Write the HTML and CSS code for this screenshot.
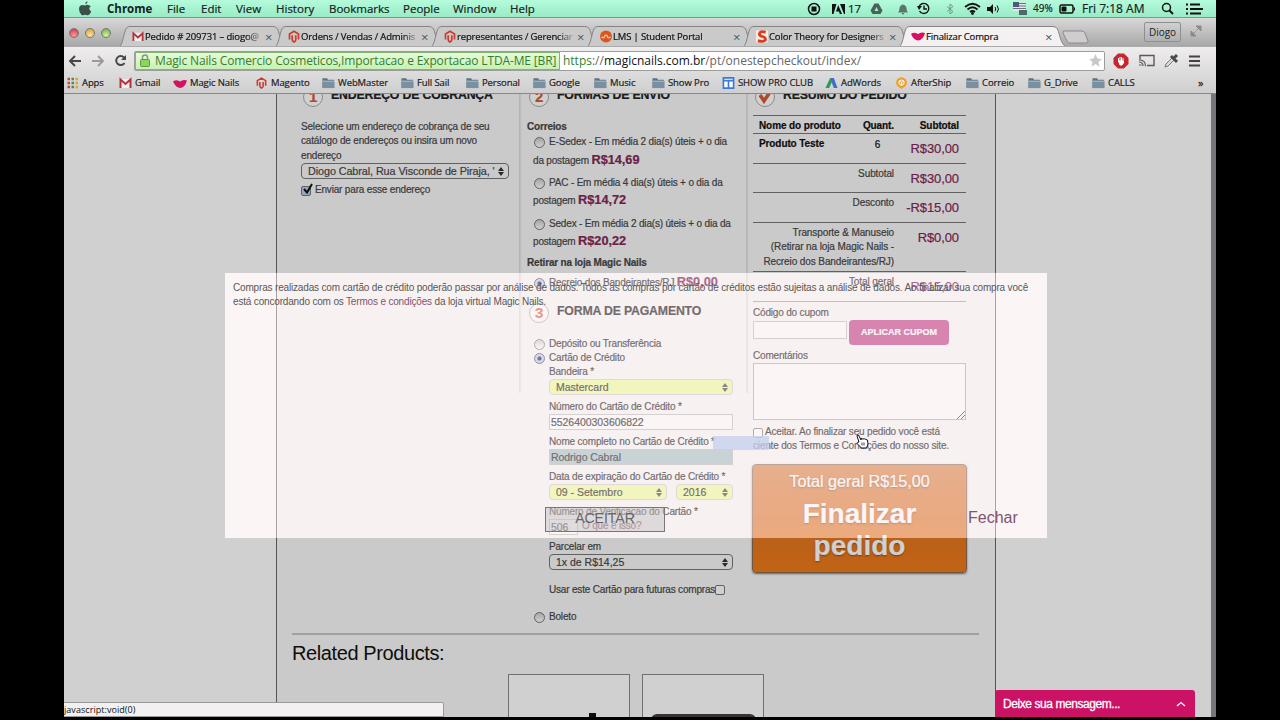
FILE: index.html
```
<!DOCTYPE html>
<html lang="pt-BR">
<head>
    <meta charset="UTF-8">
    <meta name="viewport" content="width=device-width, initial-scale=1.0">
    <title>Finalizar Compra</title>
    <link rel="stylesheet" href="styles.css">
</head>
<body>
    <!-- Shared icons -->
    <svg class="defs" width="0" height="0">
        <symbol id="folder" viewBox="0 0 14 12"><path d="M.5 1h5l1 1.500h6.500V11H.5z" fill="#5d7384"/><path d="M.5 4h13v7.500H.5z" fill="#7890a2"/><path d="M.5 3.500h13v1H.5z" fill="#b9c7d1"/></symbol>
        <symbol id="gmail" viewBox="0 0 13 12"><path d="M1 2h11v9H1z" fill="#eee"/><path d="M1.500 11V2.500l5 4.500 5-4.500V11" fill="none" stroke="#b4323a" stroke-width="2"/></symbol>
        <symbol id="magento" viewBox="0 0 12 13"><path d="M1.500 9.500V4L6 1.200 10.500 4v5.500M4.200 10.500V5.300M7.800 10.500V5.300M4.200 10.500L6 12l1.800-1.500" fill="none" stroke="#cf3b2b" stroke-width="1.700"/></symbol>
        <symbol id="lips" viewBox="0 0 14 9"><path d="M0 2Q3 0 6 1.500 7 2.300 8 1.500 11 0 14 1 12 8 7.500 8.500 2.500 8 0 2z" fill="#d5125f"/></symbol>
        <symbol id="tab-shape" viewBox="0 0 166 20"><path d="M0 20C3 18 4 4 7 1.500Q8 .5 10 .5H153Q156 .5 157.500 3C160 9 161 18 165 20"/></symbol>
    </svg>

    <div class="screen">
        <div class="menubar">
            <svg width="14" height="16" viewBox="0 0 14 16"><path d="M9.500 0Q9.800 2.500 7.200 3.600 6.900 1.300 9.500 0zM7 4.600Q8.500 3.700 10 3.900 12 4.100 12.800 5.300 9.500 7.500 13.200 10.400 12.400 12.800 10.600 14.100 9.500 14.500 8.300 13.900 7 13.500 5.800 14 4.500 14.700 3.400 13.800 1 11.500 1 8 1.100 4.500 4 4 5.500 3.900 7 4.600z" fill="#3b5049"/></svg>
            <b>Chrome</b><span>File</span><span>Edit</span><span>View</span><span>History</span><span>Bookmarks</span><span>People</span><span>Window</span><span>Help</span>
            <svg width="14" height="14" viewBox="0 0 14 14"><circle cx="7" cy="7" r="5.500" fill="none" stroke="#111" stroke-width="1.500"/><rect x="4.500" y="4.500" width="5" height="5" fill="#111"/></svg>
            <svg width="13" height="12" viewBox="0 0 13 12"><path d="M0 1h4.500L1.500 11H0zM8 1h5v10h-1zM6.200 2L10 11H7.800L7 8.500H4z" fill="#111"/></svg>
            <span>17</span>
            <svg width="13" height="12" viewBox="0 0 13 12"><path d="M4.500.5h4l4 7-2 3.500h-8L.5 7.500z" fill="#48625a"/><path d="M6.500 4L4.500 8h4z" fill="#a9ecd0"/></svg>
            <svg width="12" height="12" viewBox="0 0 12 12"><path d="M1 9.500Q2.500 8 2.500 5 3 2 6 1.500 9 2 9.500 5 9.500 8 11 9.500zM4.500 10h3L6 12z" fill="#55786b"/></svg>
            <svg width="14" height="13" viewBox="0 0 14 13"><path d="M2 5A5 5 0 1 1 2.500 9M7 3.500V7h3" fill="none" stroke="#111" stroke-width="1.400"/><path d="M0 4h5L2 8z" fill="#111"/></svg>
            <svg width="8" height="12" viewBox="0 0 8 12"><path d="M1 3.500l6 5L4 11V1l3 2.500-6 5" fill="none" stroke="#6a9c88"/></svg>
            <svg width="17" height="13" viewBox="0 0 17 13"><path d="M1 5Q8.500-1.500 16 5M3.500 7.500Q8.500 3 13.500 7.500M6 10Q8.500 8 11 10" fill="none" stroke="#111" stroke-width="1.800"/><circle cx="8.500" cy="11.500" r="1.400" fill="#111"/></svg>
            <svg width="13" height="12" viewBox="0 0 13 12"><path d="M0 4h3l3-3v10L3 8H0z" fill="#111"/><path d="M8 4q1.500 2 0 4M10 2.500q3 3.500 0 7" fill="none" stroke="#111"/></svg>
            <svg width="14" height="13" viewBox="0 0 14 13"><path d="M0 0h13v9H0z" fill="#dce9e5"/><path d="M0 0h6v5H0z" fill="#485b7a"/><path d="M6 1.500h7M6 4h7M0 6.500h13" stroke="#6f6d78"/><path d="M6 8h8v5H6z" fill="#4a6b69"/></svg>
            <span class="battery">49%</span>
            <svg width="17" height="10" viewBox="0 0 17 10"><rect x="1" y="1" width="13" height="8" rx="1.500" fill="none" stroke="#111" stroke-width="1.500"/><path d="M3 3h4v4H3zM15.500 3.500v3" stroke="#111" fill="#111"/></svg>
            <span class="clock">Fri 7:18 AM</span>
            <svg width="13" height="13" viewBox="0 0 13 13"><path d="M8 8l4 4" stroke="#111" stroke-width="2"/><circle cx="5.500" cy="5.500" r="4" fill="none" stroke="#111" stroke-width="1.500"/></svg>
            <svg width="17" height="12" viewBox="0 0 17 12"><path d="M0 1.500h2M0 6h2M0 10.500h2M4 1.500h10M4 6h13M4 10.500h11" stroke="#111" stroke-width="1.800"/></svg>
        </div>

        <div class="tabstrip">
            <div class="lights"><i class="red"></i><i class="yellow"></i><i class="green"></i></div>
            <div class="tab"><svg class="tab-bg"><use href="#tab-shape"/></svg><svg class="fav"><use href="#gmail"/></svg><span>Pedido # 209731 – diogo@</span><em>×</em></div>
            <div class="tab"><svg class="tab-bg"><use href="#tab-shape"/></svg><svg class="fav"><use href="#magento"/></svg><span>Ordens / Vendas / Adminis</span><em>×</em></div>
            <div class="tab"><svg class="tab-bg"><use href="#tab-shape"/></svg><svg class="fav"><use href="#magento"/></svg><span>representantes / Gerenciar</span><em>×</em></div>
            <div class="tab"><svg class="tab-bg"><use href="#tab-shape"/></svg><svg class="fav" viewBox="0 0 13 13"><circle cx="6.500" cy="6.500" r="6.500" fill="#d8581f"/><path d="M2 6.500a1.500 1.500 0 0 0 3 0 1.500 1.500 0 0 1 3 0 1.500 1.500 0 0 0 3 0" fill="none" stroke="#f3c3a8" stroke-width="1.500"/></svg><span>LMS | Student Portal</span><em>×</em></div>
            <div class="tab"><svg class="tab-bg"><use href="#tab-shape"/></svg><svg class="fav" viewBox="0 0 13 13"><path d="M0 0h13v13H0z" fill="#f5ece8"/><path d="M10.500 2Q4 0 3.500 4 4 6 7 6.500q4 1 3 4Q8 13 2 11" fill="none" stroke="#d8401f" stroke-width="3"/></svg><span>Color Theory for Designers</span><em>×</em></div>
            <div class="tab active"><svg class="tab-bg"><use href="#tab-shape"/></svg><svg class="fav"><use href="#lips"/></svg><span>Finalizar Compra</span><em>×</em></div>
            <svg class="newtab" width="28" height="14" viewBox="0 0 28 14"><path d="M2 1h18q2 0 3 2l3 8q0 2-2 2H8q-2 0-3-2L1 3q-.5-2 1-2z" fill="#cfcdce" stroke="#8a898a"/></svg>
            <div class="user">Diogo</div>
            <svg class="expand" width="12" height="12" viewBox="0 0 12 12"><path d="M6 1h5v5zM1 6v5h5zM6.500 5.500L10 2M2 10l3.500-3.500" fill="#8b8b8b" stroke="#8b8b8b"/></svg>
        </div>

        <div class="toolbar">
            <svg width="14" height="12" viewBox="0 0 14 12"><path d="M13 6H2M7 1L2 6l5 5" fill="none" stroke="#484848" stroke-width="2"/></svg>
            <svg width="14" height="12" viewBox="0 0 14 12"><path d="M1 6h11M7 1l5 5-5 5" fill="none" stroke="#9a9a9a" stroke-width="1.800"/></svg>
            <svg width="13" height="13" viewBox="0 0 13 13"><path d="M10.500 9A4.500 4.500 0 1 1 10 3.500" fill="none" stroke="#484848" stroke-width="2"/><path d="M12 1v5H7z" fill="#484848"/></svg>
            <div class="url">
                <div class="cert"><svg width="10" height="13" viewBox="0 0 10 13"><path d="M2.500 6V3.500q0-2.500 2.500-2.500t2.500 2.500V6" fill="none" stroke="#8a958a" stroke-width="1.500"/><rect x=".5" y="5.500" width="9" height="7" rx="1" fill="#8dd45f" stroke="#5c9c42"/></svg><span>Magic Nails Comercio Cosmeticos,Importacao e Exportacao LTDA-ME [BR]</span></div>
                <div class="address"><i>https</i>://<b>magicnails.com.br</b>/pt/onestepcheckout/index/</div>
                <svg class="star" width="13" height="13" viewBox="0 0 13 13"><path d="M6.500 0l1.900 4.500 4.600.4-3.500 3 1 4.800-4-2.600-4 2.600 1-4.800L0 4.900l4.600-.4z" fill="#c9c8c9"/></svg>
            </div>
            <svg width="16" height="16" viewBox="0 0 16 16"><path d="M5 .5h6L15.500 5v6L11 15.500H5L.5 11V5z" fill="#c32730"/><path d="M5.500 8V5M7 8V4M8.500 8V4M10 8V5M5.500 8h5v2l-1.500 2h-2z" stroke="#fff" fill="#fff"/></svg>
            <svg width="16" height="13" viewBox="0 0 16 13"><path d="M1 5V1.500h14v10H8" fill="none" stroke="#5a5a5a" stroke-width="1.400"/><path d="M0 11h2.500M0 8q4 0 4 4M0 5.800q6.500 0 6.500 6.500" fill="none" stroke="#5a5a5a" stroke-width="1.200"/></svg>
            <svg width="16" height="15" viewBox="0 0 16 15"><path d="M1 14l1-3 6-6 2 2-6 6z" fill="#ddd" stroke="#777"/><path d="M7 3l6 6M9.500 5.500L13 2" stroke="#4a4a52" stroke-width="3"/></svg>
            <svg width="11" height="12" viewBox="0 0 11 12"><path d="M0 1.500h11M0 6h11M0 10.500h11" stroke="#444" stroke-width="2"/></svg>
        </div>

        <div class="bookmarks">
            <div><svg viewBox="0 0 12 12"><path d="M1 2h2.500M1 6h2.500M1 10h2.500" stroke="#c4483a" stroke-width="2.500"/><path d="M5 2h2.500M5 6h2.500M5 10h2.500" stroke="#588a4a" stroke-width="2.500"/><path d="M9 2h2.500M9 6h2.500M9 10h2.500" stroke="#d9a92e" stroke-width="2.500"/></svg>Apps</div>
            <div><svg><use href="#gmail"/></svg>Gmail</div>
            <div><svg class="lips"><use href="#lips" y="1"/></svg>Magic Nails</div>
            <div><svg><use href="#magento"/></svg>Magento</div>
            <div><svg><use href="#folder"/></svg>WebMaster</div>
            <div><svg><use href="#folder"/></svg>Full Sail</div>
            <div><svg><use href="#folder"/></svg>Personal</div>
            <div><svg><use href="#folder"/></svg>Google</div>
            <div><svg><use href="#folder"/></svg>Music</div>
            <div><svg><use href="#folder"/></svg>Show Pro</div>
            <div><svg viewBox="0 0 13 13"><path d="M1 1h11v11H1zM1 4h11M6.500 4v8" fill="#fff" stroke="#3b78d8" stroke-width="1.800"/></svg>SHOW PRO CLUB</div>
            <div><svg viewBox="0 0 13 13"><path d="M5 1h4l4 11H9z" fill="#3a6fd0"/><path d="M5 1l2.500 3L4 12H0z" fill="#2f9a55"/></svg>AdWords</div>
            <div><svg viewBox="0 0 13 13"><path d="M6.500 13L3.500 10h6z" fill="#e8982a"/><circle cx="6.500" cy="6" r="5.800" fill="#eda02e"/><path d="M3.800 4.500l2.700-1.300 2.700 1.300v3L6.500 9 3.800 7.500zM3.800 4.500l2.700 1.300 2.700-1.300M6.500 6v3" fill="none" stroke="#fff"/></svg>AfterShip</div>
            <div><svg><use href="#folder"/></svg>Correio</div>
            <div><svg><use href="#folder"/></svg>G_Drive</div>
            <div><svg><use href="#folder"/></svg>CALLS</div>
            <div class="more">»</div>
        </div>

        <div class="viewport">
            <div class="page">
                <div class="columns">
                    <div class="col billing">
                        <h3><i>1</i>ENDEREÇO DE COBRANÇA</h3>
                        <p>Selecione um endereço de cobrança de seu<br>catálogo de endereços ou insira um novo<br>endereço</p>
                        <div class="select"><span>Diogo Cabral, Rua Visconde de Piraja, '</span></div>
                        <label class="ship"><i class="check on"><svg width="11" height="12" viewBox="0 0 11 12"><path d="M2 6l3 3.500L10 1" fill="none" stroke="#111" stroke-width="2"/></svg></i>Enviar para esse endereço</label>
                    </div>

                    <div class="col shipping">
                        <h3><i>2</i>FORMAS DE ENVIO</h3>
                        <h4>Correios</h4>
                        <div class="rate"><i class="radio"></i>E-Sedex - Em média 2 dia(s) úteis + o dia<br>da postagem <b>R$14,69</b></div>
                        <div class="rate"><i class="radio"></i>PAC - Em média 4 dia(s) úteis + o dia da<br>postagem <b>R$14,72</b></div>
                        <div class="rate"><i class="radio"></i>Sedex - Em média 2 dia(s) úteis + o dia da<br>postagem <b>R$20,22</b></div>
                        <h4 class="store">Retirar na loja Magic Nails</h4>
                        <div class="rate pickup"><i class="radio on"></i>Recreio dos Bandeirantes/RJ <b>R$0,00</b></div>

                        <h3 class="payment"><i>3</i>FORMA DE PAGAMENTO</h3>
                        <div class="method veiled"><i class="radio"></i>Depósito ou Transferência</div>
                        <div class="method veiled"><i class="radio on"></i>Cartão de Crédito</div>
                        <div class="card-form">
                            <div class="veiled">
                                <label>Bandeira *</label>
                                <div class="select yellow">Mastercard</div>
                                <label>Número do Cartão de Crédito *</label>
                                <div class="input">5526400303606822</div>
                                <label>Nome completo no Cartão de Crédito *</label>
                                <div class="input selected">Rodrigo Cabral</div>
                                <label>Data de expiração do Cartão de Crédito *</label>
                                <div class="dates"><div class="select yellow">09 - Setembro</div><div class="select yellow">2016</div></div>
                                <label>Número de Verificação do Cartão *</label>
                                <div class="cvv"><div class="input">506</div><a>O que é isso?</a></div>
                            </div>
                            <label>Parcelar em</label>
                            <div class="select">1x de R$14,25</div>
                            <div class="save">Usar este Cartão para futuras compras<i class="check"></i></div>
                        </div>
                        <div class="method boleto"><i class="radio"></i>Boleto</div>
                    </div>

                    <div class="col review">
                        <h3><i><svg width="14" height="14" viewBox="0 0 14 14"><path d="M2 5l4 6 6-9" fill="none" stroke="#d65a35" stroke-width="3.500"/></svg></i>RESUMO DO PEDIDO</h3>
                        <div class="order">
                            <div class="row head"><b>Nome do produto</b><b>Quant.</b><b>Subtotal</b></div>
                            <div class="row item"><b>Produto Teste</b><span>6</span><strong>R$30,00</strong></div>
                            <div class="row"><span>Subtotal</span><strong>R$30,00</strong></div>
                            <div class="row"><span>Desconto</span><strong>-R$15,00</strong></div>
                            <div class="row tall"><span>Transporte &amp; Manuseio<br>(Retirar na loja Magic Nails -<br>Recreio dos Bandeirantes/RJ)</span><strong>R$0,00</strong></div>
                            <div class="row grand veiled"><span>Total geral</span><strong>R$15,00</strong></div>
                        </div>
                        <div class="veiled">
                            <label>Código do cupom</label>
                            <div class="coupon"><div class="input"></div><div class="apply">APLICAR CUPOM</div></div>
                            <label>Comentários</label>
                            <div class="textarea"><svg width="9" height="9" viewBox="0 0 9 9"><path d="M1 9l8-8M5 9l4-4" stroke="#333"/></svg></div>
                            <div class="terms"><i class="check"></i>Aceitar. Ao finalizar seu pedido você está<br>ciente dos Termos e Condições do nosso site.</div>
                        </div>
                        <div class="finish"><span>Total geral R$15,00</span><b>Finalizar<br>pedido</b></div>
                    </div>
                </div>

                <div class="related">
                    <h2>Related Products:</h2>
                    <div class="products">
                        <div class="product"><i class="cap"></i></div>
                        <div class="product"><i class="lid"></i></div>
                    </div>
                </div>
            </div>

            <div class="highlight"></div>

            <!-- Terms dialog -->
            <div class="modal">
                <p>Compras realizadas com cartão de crédito poderão passar por análise de dados. Todos as compras por cartão de créditos estão sujeitas a análise de dados. Ao finalizar sua compra você<br>está concordando com os <a>Termos e condições</a> da loja virtual Magic Nails.</p>
                <div class="actions"><div class="accept">ACEITAR</div><a>Fechar</a></div>
            </div>

            <div class="scrollbar"></div>
            <div class="status">javascript:void(0)</div>
            <div class="chat"><span>Deixe sua mensagem...</span><svg width="10" height="6" viewBox="0 0 10 6"><path d="M1 5l4-3.500L9 5" fill="none" stroke="#fff" stroke-width="1.300"/></svg></div>
            <svg class="cursor" width="13" height="15" viewBox="0 0 13 15"><path d="M3 8L1 2Q1 .5 2.500 1L5 6V4.500l2 .5 1.500-.2L10 5.500l1.500.5.5 4-1.500 4h-5L1 9.500Q1 8 3 8z" fill="#fff" stroke="#111"/><path d="M6 8.500v3M8 8.500v3" stroke="#111" stroke-width=".8"/></svg>
        </div>
    </div>
</body>
</html>
```
FILE: styles.css
```
* {
    box-sizing: border-box;
}
body {
    margin: 0;
    background: #000;
    font-family: "Liberation Sans", Arial, sans-serif;
    height: 720px;
    overflow: hidden;
}
h2, h3, h4, p {
    margin: 0;
}
i, em {
    font-style: normal;
}
svg {
    flex: none;
}
.defs {
    position: absolute;
}
.screen {
    width: 1152px;
    height: 717px;
    margin-left: 64px;
    display: flex;
    flex-direction: column;
    font-family: "Open Sans", "Noto Sans", sans-serif;
    overflow: hidden;
}

/* Menu bar */
.menubar {
    height: 18px;
    padding-left: 14px;
    display: grid;
    grid-template-columns: 29px 60px 34px 35px 40px 53px 74px 50px 57px 297px 25px 16px 22px 27px 20px 29px 18px 23px 26px 23px 23px 27px 75px 25px 20px;
    align-items: center;
    background: linear-gradient(#b4fbdc, #9aebc6);
    border-bottom: 1px solid #7d9a8d;
    font-size: 11.5px;
    line-height: 17px;
    color: #16221d;
    white-space: nowrap;
}
.menubar span {
    -webkit-text-stroke: .2px #16221d;
}
.menubar .battery {
    margin-left: -3px;
    font-size: 10px;
}
.menubar .clock {
    margin-left: -4px;
    font-size: 12px;
}

/* Tabs */
.tabstrip {
    height: 28px;
    display: flex;
    align-items: flex-end;
    background: linear-gradient(#d9d8d9, #a9a8a9);
    font-size: 9.5px;
}
.lights {
    width: 56px;
    height: 28px;
    padding-left: 5px;
    display: flex;
    align-items: center;
    gap: 6px;
    padding-top: 1px;
}
.lights i {
    width: 10px;
    height: 10px;
    border-radius: 50%;
    border: 1px solid #777;
    background: radial-gradient(circle at 50% 80%, #ff9a9a, #c9303a);
}
.lights .yellow {
    background: radial-gradient(circle at 50% 80%, #ffe9a0, #d6942c);
}
.lights .green {
    background: radial-gradient(circle at 50% 80%, #d3f5a5, #69a53b);
}
.tab {
    position: relative;
    width: 166px;
    height: 20px;
    margin-right: -10px;
    padding: 1px 0 0 12px;
    display: flex;
    align-items: center;
    gap: 1px;
    color: #111;
}
.tab-bg {
    position: absolute;
    left: 0;
    top: 0;
    width: 166px;
    height: 20px;
    fill: #cbcacb;
    stroke: #858485;
}
.active .tab-bg {
    fill: #f5f0f2;
}
.fav {
    position: relative;
    width: 12px;
    height: 13px;
}
.active .fav {
    width: 14px;
    height: 9px;
    margin-left: -1px;
}
.tab span {
    position: relative;
    width: 119px;
    height: 16px;
    line-height: 16px;
    overflow: hidden;
    white-space: nowrap;
    letter-spacing: -.15px;
    -webkit-text-stroke: .2px #111;
}
.active.tab span {
    width: 118px;
}
.tab:not(.active) span {
    -webkit-mask-image: linear-gradient(90deg, #000 85%, transparent);
}
.tab em {
    position: relative;
    font-size: 13px;
    line-height: 16px;
    color: #555;
}
.newtab {
    margin: 0 0 2px 6px;
}
.user {
    width: 37px;
    height: 20px;
    margin: 0 9px 4px 54px;
    border: 1px solid #8f8f8f;
    border-radius: 2px;
    text-align: center;
    font-size: 10px;
    line-height: 18px;
    color: #222;
}
.expand {
    margin-bottom: 9px;
}

/* Address bar */
.toolbar {
    height: 28px;
    padding: 0 14px 0 4px;
    display: flex;
    align-items: center;
    gap: 9px;
    background: linear-gradient(#efedee, #dcdbdc);
    border-top: 1px solid #aaa;
}
.toolbar svg:nth-child(3) {
    margin-right: -2px;
}
.url {
    width: 971px;
    height: 20px;
    margin-right: -1px;
    display: flex;
    align-items: center;
    background: #fff;
    border: 1px solid #9c9c9c;
    border-radius: 2px;
    font-size: 12px;
    line-height: 18px;
    white-space: nowrap;
}
.url + svg {
    margin-right: 1px;
}
.cert {
    width: 425px;
    height: 18px;
    padding-left: 4px;
    display: flex;
    align-items: center;
    gap: 5px;
    background: linear-gradient(#e6fadb, #c8f0b4);
    border: 1px solid #86b573;
    color: #357f2c;
    letter-spacing: -.14px;
}
.address {
    width: 529px;
    padding-left: 3px;
    color: #666;
    letter-spacing: -.01px;
}
.address i {
    color: #357f2c;
}
.address b {
    font-weight: 400;
    color: #111;
}

/* Bookmarks */
.bookmarks {
    height: 20px;
    padding: 0 0 2px 2px;
    display: grid;
    grid-template-columns: 53px 54px 82px 67px 79px 65px 67px 61px 58px 70px 103px 70px 71px 62px 64px 106px 16px;
    align-items: center;
    background: linear-gradient(#dcdbdc, #d0cfd0);
    border-bottom: 1px solid #888;
    font-size: 9.5px;
    line-height: 16px;
    letter-spacing: -.1px;
    color: #1c1c1c;
    white-space: nowrap;
    -webkit-text-stroke: .2px #1c1c1c;
}
.bookmarks div {
    display: flex;
    align-items: center;
    gap: 3px;
}
.bookmarks svg {
    width: 13px;
    height: 12px;
}
.bookmarks .lips {
    width: 14px;
}
.bookmarks .more {
    font-size: 11px;
}

/* Checkout page */
.viewport {
    position: relative;
    height: 623px;
    background: #fff;
    overflow: hidden;
    font-family: "Liberation Sans", Arial, sans-serif;
    font-size: 10px;
    line-height: 14px;
    letter-spacing: -.18px;
    color: #484848;
}
.page {
    width: 720px;
    height: 640px;
    margin-left: 212px;
    background: #f9f8f8;
    border: solid #666;
    border-width: 0 1px;
}
.columns {
    display: grid;
    grid-template-columns: 242px 227px 230px;
    height: 541px;
    margin-top: -11px;
    white-space: nowrap;
    overflow: hidden;
    -webkit-text-stroke: .2px;
}
.page a {
    color: #5b0f3a;
}
.col {
    padding-left: 8px;
}
.billing {
    padding-left: 24px;
}
.shipping {
    background: linear-gradient(90deg, #d8d8d8, #f9f8f8) no-repeat 0 0 / 3px 310px;
}
.review {
    padding-left: 7px;
    background: linear-gradient(90deg, #d8d8d8, #f9f8f8) no-repeat 0 0 / 3px 310px;
}
.veiled {
    color: #000;
}
.col h3 {
    height: 24px;
    display: flex;
    align-items: center;
    gap: 8px;
    font-size: 12.3px;
    line-height: 24px;
    color: #222;
}
.col h3 i {
    width: 20px;
    height: 20px;
    margin: 4px 0 0 2px;
    display: flex;
    align-items: center;
    justify-content: center;
    border: 1px solid #aaa;
    border-radius: 50%;
    background: #fff;
    color: #d65a35;
    font-size: 15px;
}
.billing p {
    margin-top: 13px;
    line-height: 14.3px;
}
.select {
    position: relative;
    height: 16px;
    padding-left: 6px;
    border: 1px solid #777;
    border-radius: 4px;
    font-size: 10.5px;
    line-height: 14px;
    letter-spacing: 0;
}
.select::after, .select::before {
    content: "";
    position: absolute;
    right: 4px;
    top: 3px;
    border: 3px solid transparent;
    border-top: 0;
    border-bottom: 4px solid #333;
}
.select::after {
    top: 8px;
    border-top: 4px solid #333;
    border-bottom: 0;
}
.yellow.select {
    background: #efff98;
    border-color: #ccc;
}
.billing .select {
    width: 208px;
    font-size: 10.8px;
    letter-spacing: -.08px;
}
.ship {
    display: flex;
    margin-top: 4px;
    gap: 4px;
}
.check {
    display: inline-block;
    width: 10px;
    height: 10px;
    border: 1px solid #777;
    border-radius: 2px;
    background: #fff;
}
.check.on {
    margin-top: 3px;
    background: #b9cfee;
}
.check svg {
    display: block;
    margin-top: -4px;
}
.radio {
    display: inline-block;
    width: 11px;
    height: 11px;
    margin: 0 4px 0 1px;
    border: 1px solid #777;
    border-radius: 50%;
    background: linear-gradient(#ccc, #fff);
    vertical-align: -3px;
}
.radio.on {
    background: radial-gradient(circle, #112 0 1.5px, #b5ccf0 2.5px);
    border-color: #446;
}
.shipping h4 {
    margin-top: 13px;
    font-size: 10px;
}
.rate {
    height: 37px;
    margin: -1px 0 4.800px 6px;
    line-height: 18.5px;
}
.rate b {
    font-size: 12.8px;
    line-height: 14px;
    letter-spacing: -.05px;
    color: #842857;
}
.shipping .store {
    margin-top: 4px;
}
.pickup {
    height: 27px;
    margin-top: 4px;
    margin-bottom: -2px;
    color: #000;
}
.pickup b {
    color: #6a003c;
}
.shipping .payment {
    color: #000;
}
.shipping .payment i {
    margin-top: 3px;
}
.method {
    padding-left: 6px;
}
.payment + .method {
    margin-top: 14px;
}
.card-form {
    width: 184px;
    margin-left: 22px;
}
.card-form label {
    display: block;
    height: 14px;
    margin-top: 5px;
}
.card-form label:first-child {
    margin-top: 0;
}
.card-form .veiled + label {
    margin-top: 5px;
}
.input {
    height: 16px;
    padding-left: 1px;
    border: 1px solid #bbb;
    background: #fff;
    font-size: 10.5px;
    line-height: 15px;
    letter-spacing: -.05px;
}
.input.selected {
    background: #a3c0c4;
}
.dates {
    display: grid;
    grid-template-columns: 118px 57px;
    gap: 9px;
}
.cvv {
    display: flex;
    gap: 4px;
}
.cvv .input {
    width: 29px;
}
.save {
    display: flex;
    align-items: center;
    margin-top: 13px;
}
.boleto {
    margin-top: 13px;
}
.order {
    width: 213px;
    margin-top: 8px;
}
.row {
    height: 29.600px;
    padding: 3px 7px 0 6px;
    display: grid;
    grid-template-columns: 1fr 65px;
    border-top: 1px solid #777;
    text-align: right;
    letter-spacing: -.1px;
}
.row strong {
    font-size: 13px;
    font-weight: 400;
    line-height: 23px;
    color: #842857;
}
.row.head, .row.item {
    grid-template-columns: 102px 33px 65px;
    color: #111;
}
.row.head {
    height: 18px;
}
.row.item span {
    text-align: center;
    padding-top: 1px;
}
.row b:first-child {
    text-align: left;
}
.row.tall {
    height: 49px;
    line-height: 14.500px;
}
.row.grand {
    height: 31px;
    border-bottom: 1px solid #999;
}
.row.grand strong {
    color: #6a003c;
}
.review label {
    display: block;
    height: 14px;
    margin-top: 4px;
}
.coupon {
    display: flex;
    gap: 2px;
    height: 25px;
}
.coupon .input {
    width: 94px;
    height: 18px;
    margin-top: 1px;
}
.apply {
    width: 100px;
    height: 25px;
    border-radius: 4px;
    background: #bd2f80;
    color: #fff;
    font-size: 9px;
    font-weight: bold;
    line-height: 25px;
    letter-spacing: 0;
    text-align: center;
}
.textarea {
    width: 213px;
    height: 57px;
    display: flex;
    align-items: flex-end;
    justify-content: flex-end;
    border: 1px solid #aaa;
    background: #fff;
}
.terms {
    height: 28px;
    margin-top: 5px;
}
.terms .check {
    margin-right: 2px;
    vertical-align: -3px;
}
.finish {
    width: 215px;
    height: 109px;
    margin: 11px 0 0 -1px;
    padding-top: 7px;
    border: 1px solid #8a6a50;
    border-radius: 4px;
    background: linear-gradient(#d87f40, #de7426 50%, #ee7b18);
    box-shadow: 0 1px 2px #777;
    color: #fff;
    text-align: center;
    text-shadow: 0 1px 2px rgba(0, 0, 0, .4);
    letter-spacing: 0;
}
.finish span {
    display: block;
    font-size: 16.2px;
    line-height: 18px;
}
.finish b {
    display: block;
    margin-top: 8px;
    font-size: 28px;
    line-height: 32.5px;
}
.related {
    width: 687px;
    margin: 9px 0 0 15px;
    border-top: 2px solid #c4c4c4;
}
.related h2 {
    margin-top: 6px;
    font-size: 20px;
    font-weight: 400;
    line-height: 24px;
    letter-spacing: -.4px;
    color: #111;
}
.products {
    margin: 9px 0 0 216px;
    display: flex;
    gap: 12px;
}
.product {
    width: 122px;
    height: 80px;
    border: 1px solid #888;
    background: #fff;
}
.cap, .lid {
    display: block;
    width: 7px;
    height: 20px;
    margin: 38px 0 0 80px;
    background: #111;
}
.lid {
    width: 105px;
    margin: 39px 0 0 8px;
    border-radius: 6px;
    background: #4a3a40;
}

/* Floating parts */
.highlight {
    position: absolute;
    left: 649px;
    top: 342px;
    width: 56px;
    height: 14px;
    background: rgba(150, 185, 240, .75);
}
.modal {
    position: absolute;
    left: 161px;
    top: 179px;
    width: 822px;
    height: 265px;
    padding: 8px;
    background: rgba(246, 234, 236, .46);
    box-shadow: 0 0 0 1200px rgba(0, 0, 0, .185);
    white-space: nowrap;
}
.modal p {
    line-height: 14.300px;
    letter-spacing: -.17px;
    color: #585858;
}
.modal a {
    color: #80556f;
}
.actions {
    margin: 197px 0 0 312px;
    display: flex;
    gap: 303px;
    font-size: 16px;
    line-height: 22px;
    letter-spacing: 0;
}
.accept {
    width: 120px;
    height: 25px;
    border: 1px solid #777;
    background: rgba(190, 190, 190, .45);
    color: #666;
    font-size: 14px;
    line-height: 21px;
    text-align: center;
}
.scrollbar {
    position: absolute;
    right: 0;
    top: 0;
    width: 5px;
    height: 623px;
    background: #77777b;
}
.status {
    position: absolute;
    left: 0;
    bottom: 0;
    width: 380px;
    height: 15px;
    background: #f3f0f1;
    border: 1px solid #999;
    border-left: 0;
    border-radius: 0 2px 0 0;
    font-family: "Open Sans", sans-serif;
    font-size: 9px;
    line-height: 13px;
    letter-spacing: .05px;
    color: #111;
}
.chat {
    position: absolute;
    left: 931px;
    bottom: 0;
    width: 200px;
    height: 27px;
    padding: 0 9px 0 8px;
    display: flex;
    align-items: center;
    justify-content: space-between;
    border-radius: 3px 3px 0 0;
    background: #cb1265;
    color: #fff;
    font-size: 12px;
    letter-spacing: -.43px;
    -webkit-text-stroke: .3px #fff;
}
.cursor {
    position: absolute;
    left: 792px;
    top: 340px;
}
```
